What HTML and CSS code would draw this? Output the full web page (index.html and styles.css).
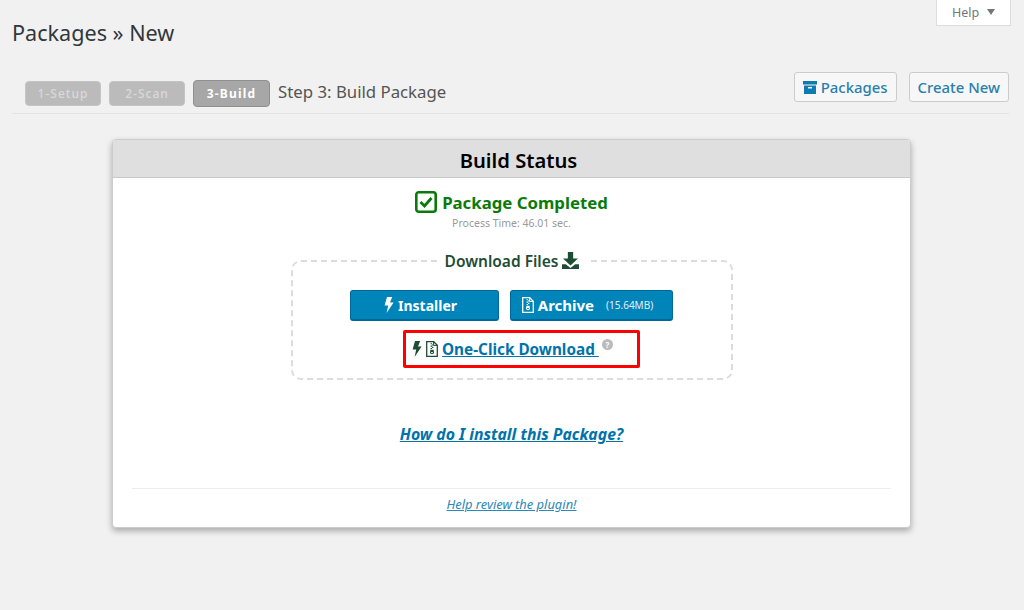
FILE: index.html
```html
<!DOCTYPE html>
<html lang="en">
<head>
<meta charset="utf-8">
<title>Packages » New</title>
<link rel="stylesheet" href="styles.css">
</head>
<body>
<svg class="defs" width="0" height="0" aria-hidden="true">
  <symbol id="bolt" viewBox="0 0 10 16"><path fill="currentColor" d="M3 0h5.200L6 5.600h3.600L2.600 16l1.600-7.600H.6z"/></symbol>
  <symbol id="zip" viewBox="0 0 12 16"><path fill="none" stroke="currentColor" stroke-width="1.300" d="M.7.7h7l3.600 3.600v11H.7z"/><path fill="none" stroke="currentColor" stroke-width="1" d="M7.600.7v3.700h3.700"/><path fill="currentColor" d="M4.600 2.200h1.400v1.100H4.600zM6 3.400h1.400v1.100H6zM4.600 4.600h1.400v1.100H4.600zM6 5.800h1.400v1.100H6zM4.600 7h1.400v1.100H4.600zM4.400 8.800h3.200l.5 3.400-2.100 1.100-2.100-1.100zM5.200 11v1h1.600v-1z" fill-rule="evenodd"/></symbol>
</svg>
<div class="help-row"><div class="help-tab">Help <span class="caret"></span></div></div>
<main class="wrap">
  <h1 class="title">Packages » New</h1>
  <div class="toolbar">
    <div class="steps">
      <span class="step">1-Setup</span>
      <span class="step">2-Scan</span>
      <span class="step step-active">3-Build</span>
      <span class="step-label">Step 3: Build Package</span>
    </div>
    <div class="actions">
      <a class="btn-light"><svg class="box" viewBox="0 0 14 13" width="14" height="13"><path fill="currentColor" d="M0 0h14v3.400H0zM1 4.400h12V13H1zM5 6v1.400h4V6z" fill-rule="evenodd"/></svg>Packages</a>
      <a class="btn-light">Create New</a>
    </div>
  </div>
  <section class="panel">
    <h2 class="panel-head">Build Status</h2>
    <div class="panel-body">
      <div class="done">
        <svg class="check" viewBox="0 0 22 22" width="22" height="22"><rect x="1.300" y="1.300" width="19.400" height="19.400" rx="2.500" fill="none" stroke="currentColor" stroke-width="2.600"/><path d="M5.500 11l4 4 7-8" fill="none" stroke="currentColor" stroke-width="2.800"/></svg>
        <span>Package Completed</span>
      </div>
      <p class="time">Process Time: 46.01 sec.</p>
      <fieldset class="files">
        <legend class="files-legend">Download Files <svg class="dl" viewBox="0 0 16 16" width="17" height="17"><path fill="currentColor" d="M5.500 0h5v6H15l-7 6.600L1 6h4.500zM0 11.500h3.500L8 15l4.500-3.500H16V16H0z"/></svg></legend>
        <div class="dl-buttons">
          <a class="btn-blue btn-installer"><svg class="ic-bolt"><use href="#bolt"/></svg>Installer</a>
          <a class="btn-blue btn-archive"><svg class="ic-zip"><use href="#zip"/></svg><span class="archive-text">Archive</span> <small class="size">(15.64MB)</small></a>
        </div>
        <div class="oneclick">
          <svg class="ic-bolt dark"><use href="#bolt"/></svg>
          <svg class="ic-zip dark"><use href="#zip"/></svg>
          <a class="oneclick-link">One-Click Download&nbsp;</a>
          <span class="q">?</span>
        </div>
      </fieldset>
      <a class="howto">How do I install this Package?</a>
      <div class="foot"><a class="review">Help review the plugin!</a></div>
    </div>
  </section>
</main>
</body>
</html>
```
FILE: styles.css
```css
* { box-sizing: border-box; }
html, body { margin: 0; height: 610px; overflow: hidden; }
body { background: #f1f1f1; font-family: "Noto Sans", "Open Sans", sans-serif; color: #444; }
.defs { display: block; height: 0; }
a { cursor: pointer; }

.help-row { display: flex; justify-content: flex-end; padding-right: 13px; height: 0; }
.help-tab { width: 75px; height: 26px; flex: none; background: #fff; border: 1px solid #dcdcdc; border-top: 0; font-size: 12.500px; color: #72777c; display: flex; align-items: center; justify-content: center; gap: 8px; }
.caret { width: 0; height: 0; border: 4.500px solid transparent; border-top: 6px solid #72777c; border-bottom: 0; margin-top: -2px; }

.wrap { padding: 0 15px 0 12px; }
.title { margin: 0; padding-top: 18px; font-size: 21.600px; line-height: 30px; font-weight: 400; color: #32373c; height: 72px; }

.toolbar { display: flex; justify-content: space-between; align-items: flex-start; height: 42px; border-bottom: 1px solid #e3e3e3; padding-left: 13px; }
.steps { display: flex; align-items: flex-start; padding-top: 9px; }
.step { width: 76px; height: 25px; margin-right: 8px; background: #bbb; border: 1px solid #c4c4c4; border-radius: 4px; font-size: 12px; font-weight: 500; letter-spacing: 1px; color: #d9d9d9; display: flex; align-items: center; justify-content: center; }
.step-active { width: 77px; height: 27px; margin-top: -1px; background: #a7a7a7; border-color: #8f8f8f; color: #fff; font-weight: 700; letter-spacing: 1.200px; }
.step-label { font-size: 16.800px; line-height: 22px; color: #555; }
.actions { display: flex; gap: 12px; }
.btn-light { height: 30px; background: #f7f7f7; border: 1px solid #ccc; border-radius: 3px; padding: 0 8px; font-size: 14.900px; font-weight: 500; color: #2a7fac; display: flex; align-items: center; gap: 4px; }
.box { flex: none; color: #0f7bb0; }

.panel { width: 799px; height: 389px; margin: 25px 0 0 100px; background: #fff; border: 1px solid #ccc; border-radius: 4px; box-shadow: 0 3px 6px rgba(0,0,0,.3); overflow: hidden; }
.panel-head { margin: 0; height: 38px; padding-left: 14px; background: #dfdfdf; border-bottom: 1px solid #c8c8c8; text-align: center; font-size: 20.200px; line-height: 40px; font-weight: 600; color: #000; }
.panel-body { padding: 12px 19px 0; text-align: center; }

.done { display: flex; justify-content: center; align-items: center; gap: 5px; height: 24px; color: #0a7a0a; font-size: 16.800px; font-weight: 700; }
.check { flex: none; }
.time { margin: 2px 0 0; font-size: 10.500px; line-height: 14px; color: #999; }

.files { width: 442px; height: 129px; margin: 21px 0 0 159px; padding: 0; border: 2px dashed #dcdcdc; border-radius: 10px; }
.files-legend { margin: 0 auto; padding: 0 8px; font-size: 15.500px; line-height: 20px; font-weight: 600; color: #1e4d34; display: flex; align-items: center; gap: 4px; }
.dl { flex: none; margin-top: -1px; }
.dl-buttons { display: flex; justify-content: center; gap: 11px; margin-top: 19px; padding-right: 1px; }
.btn-blue { height: 31px; background: #0085ba; border: 1px solid #006799; border-bottom-width: 2px; border-radius: 3px; color: #fff; font-size: 14px; font-weight: 700; display: flex; align-items: center; justify-content: center; gap: 4px; }
.btn-installer { width: 149px; padding-right: 8px; }
.btn-archive { width: 163px; padding-right: 8px; }
.archive-text { font-size: 15px; }
.size { font-size: 10px; font-weight: 400; margin-left: 8px; color: #e4f0f6; }
.ic-bolt { width: 10px; height: 16px; flex: none; }
.ic-zip { width: 12px; height: 16px; flex: none; }
.dark { color: #1e4d34; }

.oneclick { width: 237px; height: 38px; margin: 9px 0 0 110px; padding-left: 6px; border: 3px solid #f00; border-radius: 2px; display: flex; align-items: center; gap: 4px; }
.oneclick-link { font-size: 15.300px; font-weight: 700; color: #0073aa; text-decoration: underline; }
.q { width: 11px; height: 11px; border-radius: 50%; background: #bbb; color: #fff; font-size: 8px; line-height: 11px; font-weight: 700; text-align: center; margin: -10px 0 0 -1px; }

.howto { display: block; margin-top: 43px; font-size: 15.800px; line-height: 22px; font-weight: 700; font-style: italic; color: #0073aa; text-decoration: underline; }
.foot { margin-top: 43px; border-top: 1px solid #eee; padding-top: 3px; }
.review { font-size: 12.900px; line-height: 18px; font-style: italic; color: #2b88b8; text-decoration: underline; }
```
